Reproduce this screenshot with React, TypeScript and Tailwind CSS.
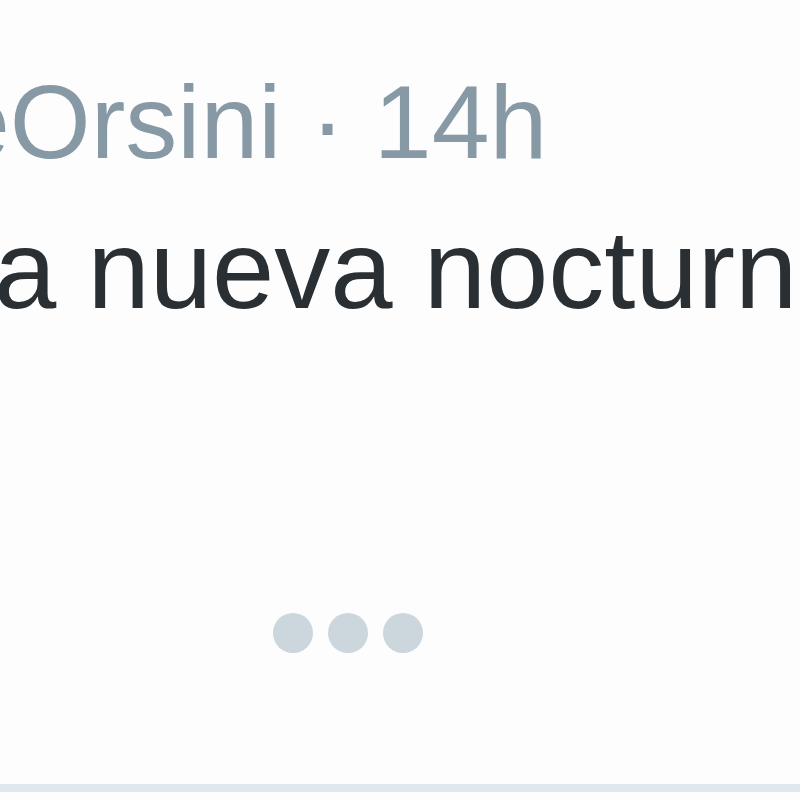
export default function App() {
  return (
    <div
      className="w-[800px] h-[800px] overflow-hidden bg-[#fdfdfd] flex flex-col"
      style={{ fontFamily: '"Liberation Sans", Arial, sans-serif' }}
    >
      <div className="pt-[70px]">
        <p className="ml-[-48px] whitespace-nowrap text-[104px] leading-none text-[#8899a6]">
          eOrsini · 14h
        </p>
        <p className="mt-[40px] ml-[-6px] whitespace-nowrap text-[112px] leading-none text-[#292f33]">
          a nueva nocturna
        </p>
      </div>

      {/* loading dots */}
      <div className="mt-[287px] ml-[273px] flex gap-[15px]">
        <span className="w-[40px] h-[40px] rounded-full bg-[#ccd6dd]" />
        <span className="w-[40px] h-[40px] rounded-full bg-[#ccd6dd]" />
        <span className="w-[40px] h-[40px] rounded-full bg-[#ccd6dd]" />
      </div>

      <div className="flex-1" />
      <div className="h-[8px] bg-[#e1e8ed]" />
      <div className="h-[8px]" />
    </div>
  );
}
